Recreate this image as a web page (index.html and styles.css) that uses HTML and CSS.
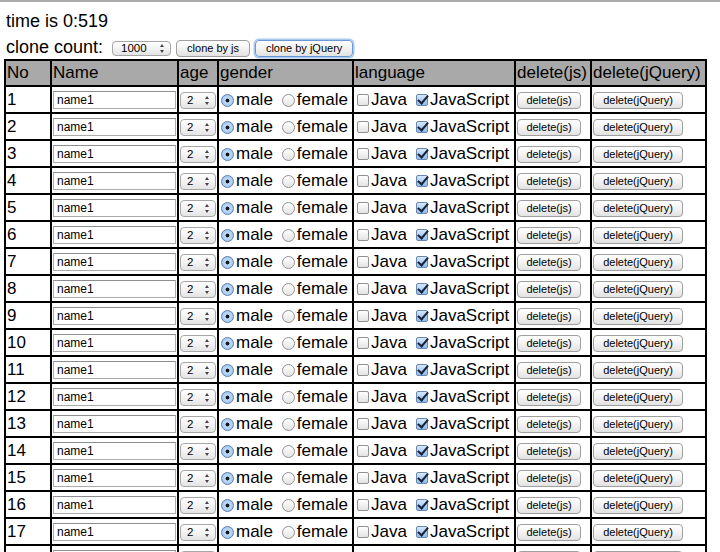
FILE: index.html
```html
<!DOCTYPE html>
<html lang="en">
<head>
    <meta charset="UTF-8">
    <title>clone test</title>
    <link rel="stylesheet" href="styles.css">
</head>
<body>
    <div class="time">time is 0:519</div>
    <div class="controls">clone count: <span class="select-wrap count-wrap"><select class="count-select"><option>1000</option></select></span> <button class="btn clone-js">clone by js</button> <button class="btn clone-jq focused">clone by jQuery</button></div>

    <table class="grid">
        <thead>
            <tr>
                <th class="col-no">No</th>
                <th class="col-name">Name</th>
                <th class="col-age">age</th>
                <th class="col-gender">gender</th>
                <th class="col-lang">language</th>
                <th class="col-deljs">delete(js)</th>
                <th class="col-deljq">delete(jQuery)</th>
            </tr>
        </thead>
        <tbody id="rows"></tbody>
    </table>

    <script>
        // build the rows like the clone test does
        const tbody = document.getElementById('rows');
        for (let i = 1; i <= 18; i++) {
            const tr = document.createElement('tr');
            tr.innerHTML =
                '<td>' + i + '</td>' +
                '<td><input type="text" class="name-input" value="name1"></td>' +
                '<td><span class="select-wrap"><select class="age-select"><option>1</option><option selected>2</option><option>3</option></select></span></td>' +
                '<td><label><input type="radio" name="g' + i + '" checked>male</label><label class="second"><input type="radio" name="g' + i + '">female</label></td>' +
                '<td><label><input type="checkbox">Java</label><label class="second"><input type="checkbox" checked>JavaScript</label></td>' +
                '<td><button class="btn del-js">delete(js)</button></td>' +
                '<td><button class="btn del-jq">delete(jQuery)</button></td>';
            tbody.appendChild(tr);
        }
    </script>
</body>
</html>
```

FILE: styles.css
```css
/* page */
html {
    overflow: hidden;
}

body {
    margin: 0;
    padding: 0 5px 0 4px;
    border-top: 2px solid #ababab;
    font-family: "Liberation Sans", Arial, sans-serif;
    font-size: 17px;
    color: #000;
    background: #fff;
    overflow: hidden;
}

.time {
    font-size: 18px;
    line-height: 22px;
    padding-top: 8px;
    padding-left: 2px;
}

.controls {
    font-size: 18px;
    height: 27px;
    line-height: 30px;
    padding-left: 2px;
    white-space: nowrap;
}

/* mac style form controls */
.btn {
    appearance: none;
    -webkit-appearance: none;
    box-sizing: border-box;
    height: 17px;
    margin: 0;
    padding: 0;
    border: 1px solid #9f9f9f;
    border-radius: 4px;
    background: linear-gradient(#ffffff, #f3f3f3 50%, #e2e2e2);
    font-family: "Liberation Sans", Arial, sans-serif;
    font-size: 11px;
    line-height: 15px;
    color: #000;
    vertical-align: middle;
}

.btn.focused {
    border-color: #6a98d4;
    box-shadow: 0 0 0 1.5px #a9c9ef;
}

.clone-js {
    width: 74px;
}

.clone-jq {
    width: 98px;
}

.del-js {
    width: 64px;
}

.del-jq {
    width: 90px;
}

.select-wrap {
    position: relative;
    display: inline-flex;
    vertical-align: middle;
}

/* up / down arrows of the select */
.select-wrap::before,
.select-wrap::after {
    content: "";
    position: absolute;
    right: 7px;
    border-left: 2.5px solid transparent;
    border-right: 2.5px solid transparent;
}

.select-wrap::before {
    top: 4px;
    border-bottom: 3px solid #444;
}

.select-wrap::after {
    bottom: 4px;
    border-top: 3px solid #444;
}

.age-select,
.count-select {
    appearance: none;
    -webkit-appearance: none;
    box-sizing: border-box;
    margin: 0;
    border: 1px solid #a6a6a6;
    border-radius: 4px;
    background: linear-gradient(#ffffff, #f3f3f3 50%, #e4e4e4);
    font-family: "Liberation Sans", Arial, sans-serif;
    font-size: 11.5px;
    color: #000;
}

.age-select {
    width: 36px;
    height: 17px;
    padding: 0 0 0 6px;
}

.count-wrap {
    margin-left: 4px;
}

.count-wrap::before {
    top: 3px;
}

.count-wrap::after {
    bottom: 3px;
}

.count-select {
    width: 59px;
    height: 15px;
    padding: 0 0 0 8px;
    line-height: 13px;
}

.name-input {
    box-sizing: border-box;
    width: 123px;
    height: 18px;
    margin: 0;
    padding: 0 3px;
    border: 1px solid #ababab;
    border-top-color: #8e8e8e;
    font-family: "Liberation Sans", Arial, sans-serif;
    font-size: 12px;
    color: #000;
    vertical-align: middle;
}

input[type="radio"],
input[type="checkbox"] {
    appearance: none;
    -webkit-appearance: none;
    position: relative;
    box-sizing: border-box;
    border: 1px solid #919191;
    background: linear-gradient(#ffffff, #e4e4e4);
    vertical-align: middle;
}

input[type="radio"] {
    width: 13px;
    height: 13px;
    margin: 0 2px 0 1px;
    border-radius: 50%;
}

input[type="radio"]:checked {
    border-color: #5f7fab;
    background: radial-gradient(circle, #15191f 0, #15191f 1.6px, #c3dcf7 2.3px, #8bbaf0 100%);
}

input[type="checkbox"] {
    width: 12px;
    height: 12px;
    margin: 0 2px;
    border-radius: 2px;
}

input[type="checkbox"]:checked {
    border-color: #6b86ad;
    background: linear-gradient(#d6e7fa, #8fbcee);
}

input[type="checkbox"]:checked::after {
    content: "";
    position: absolute;
    left: 3px;
    top: -2px;
    width: 4px;
    height: 9px;
    border: solid #16233a;
    border-width: 0 2px 2px 0;
    transform: rotate(40deg);
}

label.second {
    margin-left: 8px;
}

td label.second input[type="checkbox"] {
    margin-left: 1px;
}

/* table */
.grid {
    table-layout: fixed;
    width: 703px;
    border: 1px solid #000;
    border-spacing: 0;
}

.grid th,
.grid td {
    box-sizing: border-box;
    border: 1px solid #000;
    padding: 0 1px;
    white-space: nowrap;
    overflow: hidden;
    vertical-align: middle;
    font-size: 17px;
}

.grid th {
    height: 26px;
    background: #a9a9a9;
    font-weight: normal;
    text-align: left;
}

.grid td {
    height: 27px;
}

.col-no { width: 46px; }
.col-name { width: 127px; }
.col-age { width: 40px; }
.col-gender { width: 135px; }
.col-lang { width: 162px; }
.col-deljs { width: 76px; }
.col-deljq { width: 115px; }
```
